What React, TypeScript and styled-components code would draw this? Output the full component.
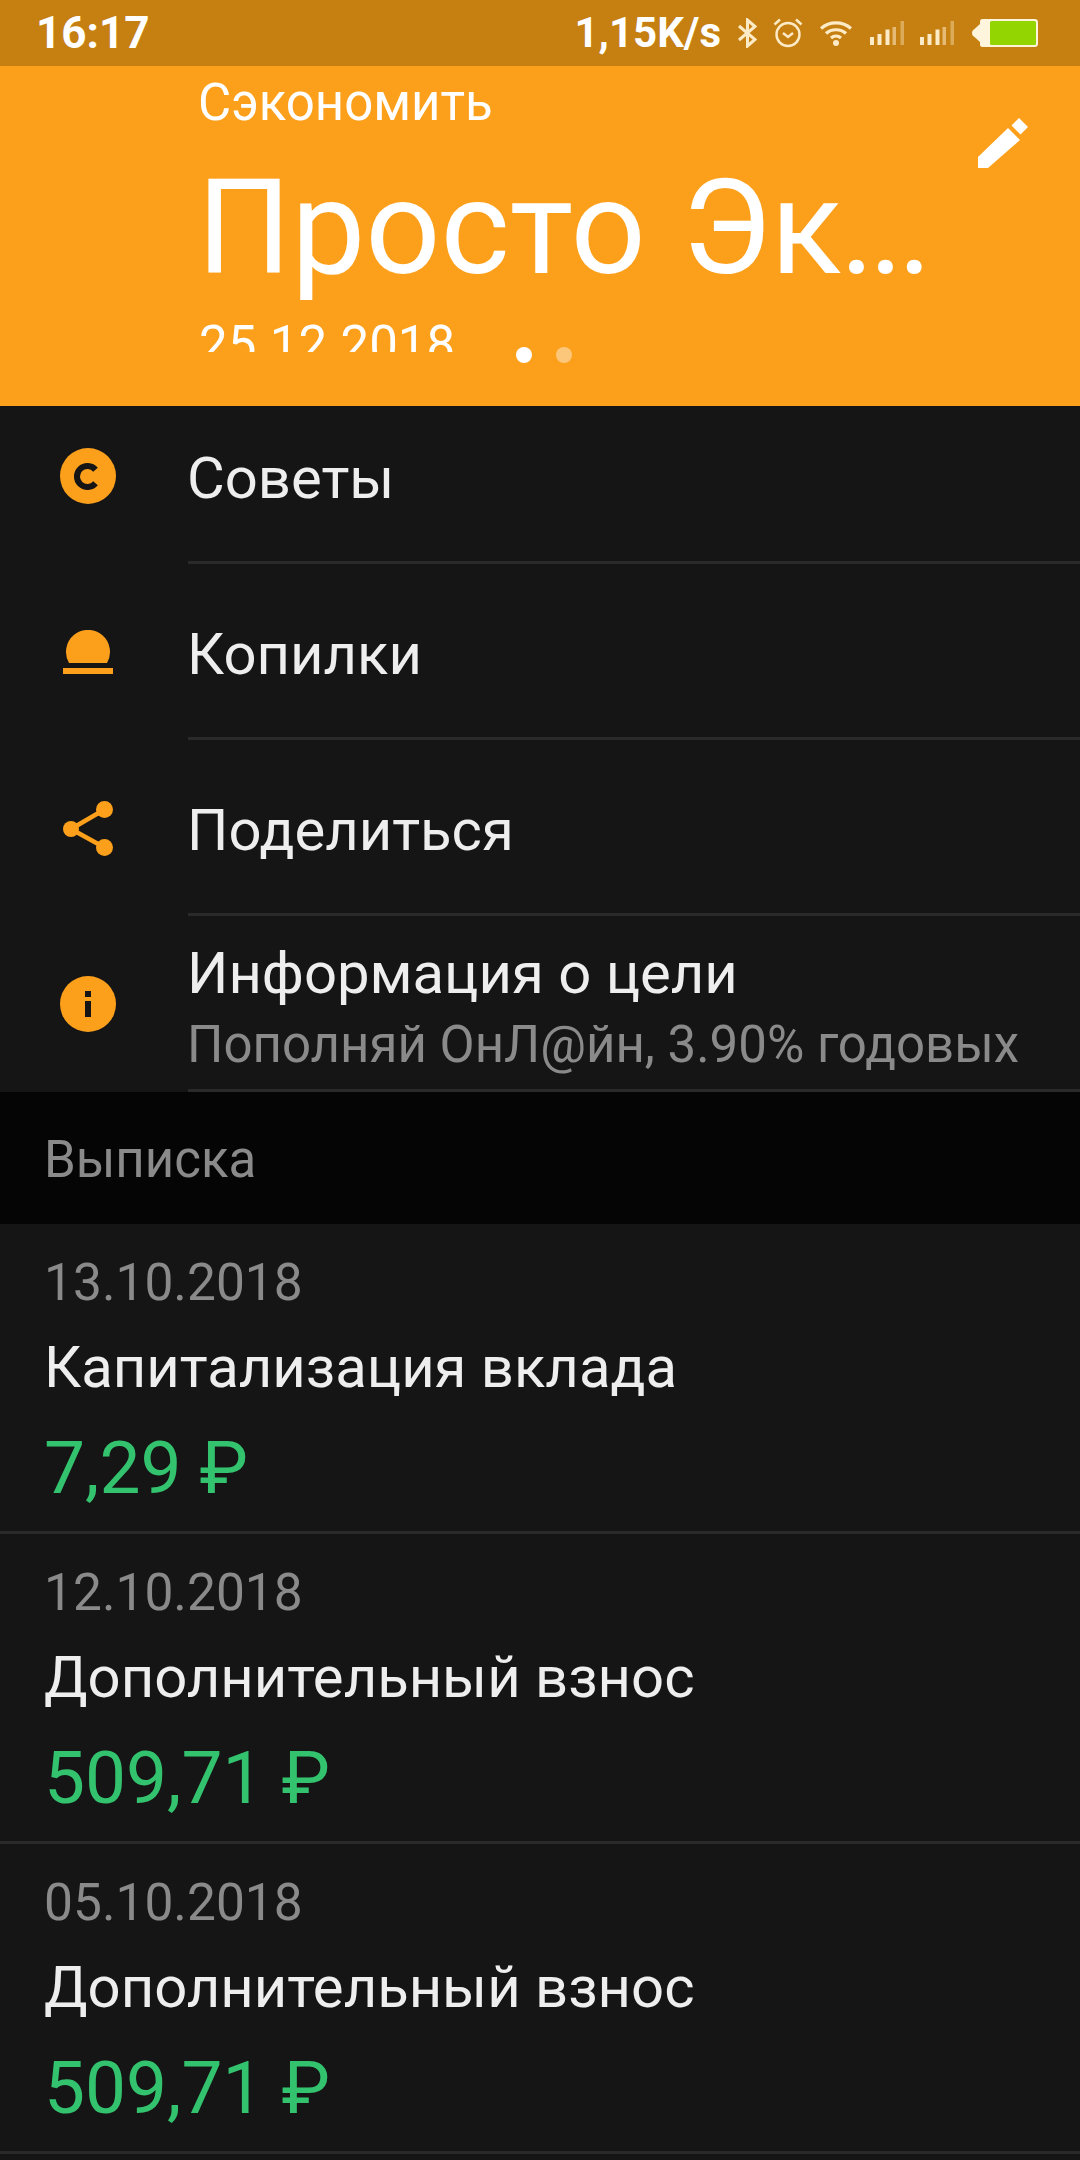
import React from "react";
import styled, { createGlobalStyle } from "styled-components";

const Global = createGlobalStyle`
  html, body { margin: 0; padding: 0; background: #151515; }
  body { font-family: Roboto, "Noto Sans", sans-serif; }
  #root { width: 1080px; height: 2160px; overflow: hidden; }
`;

const Page = styled.div`
  width: 1080px;
  height: 2160px;
  overflow: hidden;
  background: #151515;
  display: flex;
  flex-direction: column;
`;

const StatusBar = styled.div`
  position: relative;
  z-index: 2;
  height: 66px;
  flex: none;
  background: #c68012;
  display: flex;
  align-items: center;
  padding: 0 42px 0 36px;
  color: #fff;
`;
const Clock = styled.div`
  font-size: 44px;
  font-weight: 700;
  line-height: 66px;
  flex: 1;
`;
const Speed = styled.div`
  font-size: 42px;
  font-weight: 700;
  line-height: 66px;
  margin-right: 17px;
`;
const StatusIcons = styled.div`
  display: flex;
  align-items: center;
`;
const StatusSvg = styled.svg<{ $gap?: number }>`
  display: block;
  margin-right: ${(p) => p.$gap ?? 0}px;
`;

const Header = styled.header`
  position: relative;
  z-index: 1;
  height: 340px;
  flex: none;
  box-sizing: border-box;
  background: #fca01c;
  color: #fff;
  padding: 0 0 0 198px;
`;
const HeaderText = styled.div`
  height: 286px;
  overflow: hidden;
`;
const Kicker = styled.div`
  font-size: 51px;
  line-height: 56px;
  margin-top: 9px;
`;
const Title = styled.div`
  font-size: 132px;
  line-height: 156px;
  margin-top: 19px;
  margin-left: -1px;
  word-spacing: 3px;
  white-space: nowrap;
`;
const TitleDots = styled.span`
  letter-spacing: -6px;
  margin-left: -2px;
`;
const HeaderDate = styled.div`
  font-size: 51px;
  line-height: 56px;
  margin-top: 11px;
  margin-left: 1px;
`;
const Pencil = styled.svg`
  position: absolute;
  right: 52px;
  top: 52px;
`;
const Dots = styled.div`
  position: absolute;
  left: 516px;
  top: 281px;
  display: flex;
  gap: 24px;
`;
const Dot = styled.span<{ $active?: boolean }>`
  width: 16px;
  height: 16px;
  border-radius: 50%;
  background: ${(p) => (p.$active ? "#fff" : "#fdc77b")};
`;

const Menu = styled.div`
  margin-top: -18px;
  flex: none;
`;
const MenuRow = styled.div`
  height: 176px;
  display: flex;
  align-items: stretch;
`;
const MenuIcon = styled.div`
  width: 188px;
  flex: none;
  display: flex;
  align-items: center;
  justify-content: center;
  padding-right: 12px;
  box-sizing: border-box;
`;
const MenuBody = styled.div`
  flex: 1;
  border-bottom: 3px solid #2a2a2a;
  display: flex;
  flex-direction: column;
  justify-content: center;
  padding-top: 6px;
  min-width: 0;
`;
const MenuTitle = styled.div`
  font-size: 58px;
  line-height: 58px;
  color: #eeeeee;
  margin-left: -1px;
`;
const MenuSub = styled.div`
  font-size: 51px;
  line-height: 54px;
  color: #8a8a8a;
  margin: 16px 0 -4px -1px;
  white-space: nowrap;
`;

const SectionHead = styled.div`
  height: 132px;
  flex: none;
  box-sizing: border-box;
  background: #050505;
  color: #8a8a8a;
  font-size: 51px;
  line-height: 136px;
  padding-left: 44px;
`;

const Entry = styled.div`
  height: 310px;
  flex: none;
  box-sizing: border-box;
  padding: 30px 0 0 44px;
  border-bottom: 3px solid #2a2a2a;
`;
const EntryDate = styled.div`
  font-size: 51.5px;
  line-height: 58px;
  color: #8a8a8a;
`;
const EntryTitle = styled.div`
  font-size: 58px;
  line-height: 60px;
  color: #eeeeee;
  margin-top: 25px;
`;
const EntryAmount = styled.div`
  font-size: 73px;
  line-height: 80px;
  color: #33c36e;
  margin-top: 31px;
`;

const cream = "#fdeac6";

const SignalIcon = ({ gap }: { gap: number }) => (
  <StatusSvg $gap={gap} width="34" height="24" viewBox="0 0 34 24" fill={cream}>
    <rect x="0" y="16" width="4" height="8" />
    <rect x="7.5" y="13" width="4" height="11" />
    <rect x="15.500" y="8.500" width="4" height="15.500" />
    <rect x="22.500" y="6" width="3.500" height="18" opacity=".55" />
    <rect x="30.500" y="0" width="3.500" height="24" opacity=".4" />
  </StatusSvg>
);

const entries = [
  { date: "13.10.2018", title: "Капитализация вклада", amount: "7,29 ₽" },
  { date: "12.10.2018", title: "Дополнительный взнос", amount: "509,71 ₽" },
  { date: "05.10.2018", title: "Дополнительный взнос", amount: "509,71 ₽" },
];

export default function App() {
  return (
    <Page>
      <Global />
      <StatusBar>
        <Clock>16:17</Clock>
        <Speed>1,15K/s</Speed>
        <StatusIcons>
          <StatusSvg $gap={16} width="19" height="30" viewBox="0 0 19 30" fill="none" stroke={cream} strokeWidth="3">
            <path d="M1 8l16 13.500L9.500 28V2L17 8.500 1 22" />
          </StatusSvg>
          <StatusSvg $gap={17} width="30" height="30" viewBox="0 0 30 30" fill="none" stroke={cream} strokeWidth="2.4">
            <circle cx="15" cy="16.500" r="11.500" />
            <path d="M10 15l5 4 5-4" />
            <path d="M1.500 6.500L7 1.500M28.500 6.500L23 1.500" />
          </StatusSvg>
          <StatusSvg $gap={18} width="32" height="26" viewBox="0 0 32 26" fill="none" stroke={cream} strokeWidth="3.200">
            <path d="M1 8.500C9.500 1 22.500 1 31 8.500" />
            <path d="M6 13.500c5.500-5 14.500-5 20 0" />
            <path d="M11 18c3-2.500 7-2.500 10 0" />
            <circle cx="16" cy="23" r="3" fill={cream} stroke="none" />
          </StatusSvg>
          <SignalIcon gap={16} />
          <SignalIcon gap={18} />
          <StatusSvg width="66" height="30" viewBox="0 0 66 30">
            <path d="M0 15c0-2 1-3 2.500-4L8 6V3.500C8 1.500 9.500 1 11 1h52c1.500 0 3 1 3 3v22c0 2-1.500 3-3 3H11c-1.500 0-3-.5-3-2.500V24l-5.500-5C1 18 0 17 0 15z" fill="#fff4dc" />
            <rect x="18" y="3" width="46" height="24" rx="1.500" fill="#92d500" />
          </StatusSvg>
        </StatusIcons>
      </StatusBar>
      <Header>
        <HeaderText>
          <Kicker>Сэкономить</Kicker>
          <Title>Просто Эк<TitleDots>...</TitleDots></Title>
          <HeaderDate>25.12.2018</HeaderDate>
        </HeaderText>
        <Pencil width="50" height="50" viewBox="0 0 50 50" fill="#fff">
          <path d="M0 50V39L30 10l12 12-32 28z" />
          <path d="M33.500 7.500L41 0l9 9-7.500 7.500z" />
        </Pencil>
        <Dots>
          <Dot $active />
          <Dot />
        </Dots>
      </Header>
      <Menu>
        <MenuRow>
          <MenuIcon>
            <svg width="56" height="56" viewBox="0 0 56 56">
              <circle cx="28" cy="28" r="28" fill="#fca01c" />
              <path d="M35.500 21.750A10.500 10.500 0 1 0 35.500 35.250" fill="none" stroke="#151515" strokeWidth="6" />
            </svg>
          </MenuIcon>
          <MenuBody><MenuTitle>Советы</MenuTitle></MenuBody>
        </MenuRow>
        <MenuRow>
          <MenuIcon>
            <svg width="50" height="44" viewBox="0 0 50 44" fill="#fca01c">
              <path d="M6 33A22 22 0 1 1 44 33z" />
              <rect x="0" y="38" width="50" height="6" />
            </svg>
          </MenuIcon>
          <MenuBody><MenuTitle>Копилки</MenuTitle></MenuBody>
        </MenuRow>
        <MenuRow>
          <MenuIcon>
            <svg width="50" height="55" viewBox="0 0 50 55" fill="#fca01c">
              <circle cx="8" cy="28" r="8" />
              <circle cx="41.500" cy="8.500" r="8.500" />
              <circle cx="41.500" cy="46.500" r="8.500" />
              <path d="M8 28L41.500 8.500M8 28l33.500 18.500" stroke="#fca01c" strokeWidth="4.500" fill="none" />
            </svg>
          </MenuIcon>
          <MenuBody><MenuTitle>Поделиться</MenuTitle></MenuBody>
        </MenuRow>
        <MenuRow>
          <MenuIcon>
            <svg width="56" height="56" viewBox="0 0 56 56">
              <circle cx="28" cy="28" r="28" fill="#fca01c" />
              <rect x="25" y="15" width="6" height="6" fill="#151515" />
              <rect x="25" y="25" width="6" height="16" fill="#151515" />
            </svg>
          </MenuIcon>
          <MenuBody>
            <MenuTitle>Информация о цели</MenuTitle>
            <MenuSub>Пополняй ОнЛ@йн, 3.90% годовых</MenuSub>
          </MenuBody>
        </MenuRow>
      </Menu>
      <SectionHead>Выписка</SectionHead>
      {entries.map((e) => (
        <Entry key={e.date}>
          <EntryDate>{e.date}</EntryDate>
          <EntryTitle>{e.title}</EntryTitle>
          <EntryAmount>{e.amount}</EntryAmount>
        </Entry>
      ))}
    </Page>
  );
}
